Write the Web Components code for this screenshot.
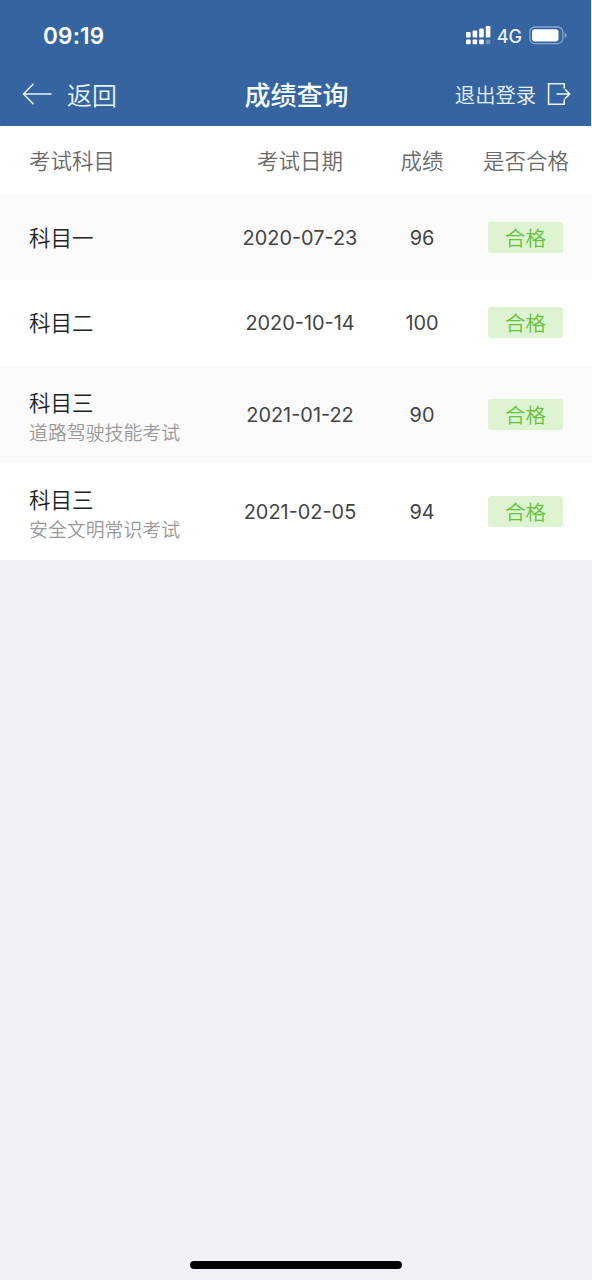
<!DOCTYPE html>
<html lang="zh-CN">
<head>
<meta charset="utf-8">
<title>成绩查询</title>
<style>
html,body{margin:0;height:100%}
body{font-family:Inter,"Noto Sans CJK SC",sans-serif;background:#f2f1f7}
</style>
</head>
<body>
<score-page></score-page>
<script>
const define = (name, html) => customElements.define(name, class extends HTMLElement {
  constructor() {
    super();
    this.attachShadow({ mode: 'open' }).innerHTML = html;
  }
});

define('status-bar', `<style>
:host{display:flex;height:63px;box-sizing:border-box;padding:9px 24px 0 43px;align-items:center;justify-content:space-between;color:#fff}
.time{font-size:22.5px;font-weight:600;line-height:54px;letter-spacing:.2px}
.right{display:flex;align-items:center}
.net{font-size:18px;font-weight:500;margin:0 7px 0 6px;color:#e8f2ff}
svg{display:block}
.cells{margin-top:-2px}
.battery{margin-top:-1px}
</style>
<span class="time">09:19</span>
<div class="right">
<svg class="cells" width="25" height="20" viewBox="0 0 25 20" fill="#fff">
<rect x="0" y="7" width="4.6" height="5.6" rx="1"/><rect x="6.6" y="5.5" width="4.6" height="7.1" rx="1"/><rect x="13.2" y="3.5" width="4.6" height="9.1" rx="1"/><rect x="19.8" y="1" width="4.6" height="11.6" rx="1"/>
<rect x="0" y="14.4" width="4.6" height="4.8" rx="1"/><rect x="6.6" y="14.4" width="4.6" height="4.8" rx="1"/><rect x="13.2" y="14.4" width="4.6" height="4.8" rx="1"/><rect x="19.8" y="14.4" width="4.6" height="4.8" rx="1" opacity=".3"/></svg>
<span class="net">4G</span>
<svg class="battery" width="38" height="19" viewBox="0 0 38 19"><rect x=".8" y="1" width="33" height="16.6" rx="5" fill="none" stroke="#86a6d2" stroke-width="1.3"/><rect x="3" y="3.2" width="26.5" height="12.2" rx="2.8" fill="#fff"/><path d="M35.6 6.8c2.6.9 2.6 4.2 0 5.2z" fill="#86a6d2"/></svg>
</div>`);

define('nav-bar', `<style>
:host{display:grid;grid-template-columns:1fr auto 1fr;align-items:center;height:63px;padding:0 19px 0 22px;color:#e8f4ff}
.back,.exit{display:flex;align-items:center}
.back{font-size:25px;font-weight:350;gap:15px}
.back span,.exit span{margin-top:-2px}
.title{font-size:26px;font-weight:500;line-height:60px;color:#f5fbff;padding-top:2px;margin-left:-1px}
.exit{justify-content:flex-end;font-size:20.3px;font-weight:350;gap:11px}
svg{display:block;margin-top:-1px}
</style>
<div class="back"><svg width="30" height="24" viewBox="0 0 30 24" fill="none" stroke="#e3f3ff" stroke-width="1.5"><path d="M11.5 1.8 1.5 12l10 10.2M1.5 12H29.5"/></svg><span>返回</span></div>
<span class="title"><slot></slot></span>
<div class="exit"><span>退出登录</span><svg width="25" height="24" viewBox="0 0 25 24" fill="none" stroke="#e3f3ff" stroke-width="1.6"><path d="M17.2 6.6V1.8H1.6v20.4h15.6v-5M9.4 12h12.9M18 7.2l4.6 4.8-4.6 4.8"/></svg></div>`);

define('pass-badge', `<style>
:host{display:block;width:75px;height:31px;border-radius:3px;background:#ddf3d1;color:#63c43c;font-size:20.5px;font-weight:350;line-height:33px;text-align:center}
</style><slot></slot>`);

const columns = 'display:grid;grid-template-columns:210px 122px 122px 85px;align-items:center;box-sizing:border-box;padding-left:29px;';

define('table-head', `<style>
:host{${columns}height:69px;padding-bottom:2px;background:#fff;border-radius:4px 4px 0 0;color:#6a6a6a;font-size:21.5px;font-weight:350;text-align:center}
span{white-space:nowrap}
.subject{text-align:left}
</style><span class="subject">考试科目</span><span>考试日期</span><span>成绩</span><span>是否合格</span>`);

define('score-row', `<style>
:host{${columns}height:85.3px;background:#fff;color:#444;font-size:19.9px;text-align:center}
:host([tall]){height:97.2px}
:host([shaded]){background:#fafafa}
.subject{text-align:left;color:#222;font-size:21.5px;font-weight:350;line-height:30px}
:host([tall]) .subject{padding-top:7px}
::slotted([slot=date]),::slotted([slot=score]){padding-top:1px}
pass-badge{justify-self:center}
</style>
<div class="subject"><slot></slot><slot name="detail"></slot></div>
<slot name="date"></slot><slot name="score"></slot><pass-badge>合格</pass-badge>`);

define('exam-detail', `<style>:host{display:block;color:#999;font-size:18.9px;font-weight:350;line-height:32px;margin-bottom:-2px}</style><slot></slot>`);

define('home-indicator', `<style>:host{display:block;width:212px;height:8px;border-radius:4px;background:#000;margin:auto auto 11px}</style>`);

define('score-page', `<style>
:host{display:flex;flex-direction:column;height:1280px;width:592px;background:#f2f1f7}
header{background:#3564a0;margin-right:1px}
main{background:#f2f1f7}
</style>
<header><status-bar></status-bar><nav-bar>成绩查询</nav-bar></header>
<main>
<table-head></table-head>
<score-row shaded>科目一<span slot="date">2020-07-23</span><span slot="score">96</span></score-row>
<score-row>科目二<span slot="date">2020-10-14</span><span slot="score">100</span></score-row>
<score-row shaded tall>科目三<exam-detail slot="detail">道路驾驶技能考试</exam-detail><span slot="date">2021-01-22</span><span slot="score">90</span></score-row>
<score-row tall>科目三<exam-detail slot="detail">安全文明常识考试</exam-detail><span slot="date">2021-02-05</span><span slot="score">94</span></score-row>
</main>
<home-indicator></home-indicator>`);
</script>
</body>
</html>
